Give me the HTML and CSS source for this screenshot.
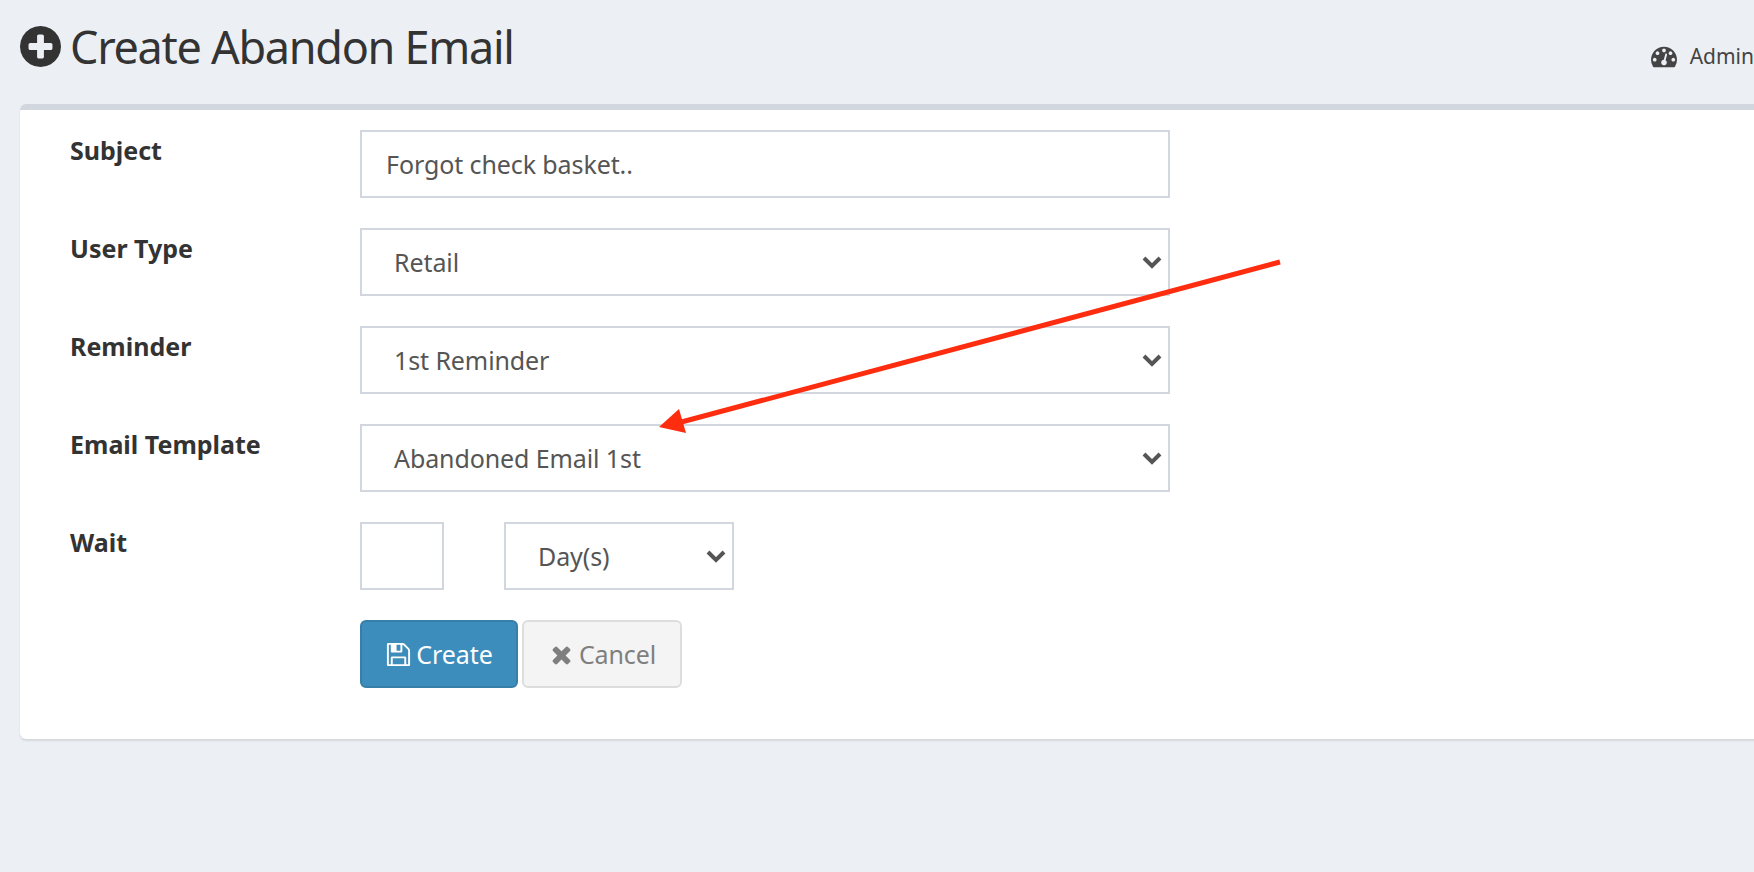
FILE: index.html
```html
<!DOCTYPE html>
<html>
<head>
    <title>Create Abandon Email</title>
    <link rel="stylesheet" href="styles.css">
</head>
<body>
<div class="wrapper">
    <div class="content-header">
        <h1>
            <svg class="title-icon" viewBox="0 0 1536 1536"><path d="M1216 832v-128q0-26-19-45t-45-19h-256v-256q0-26-19-45t-45-19h-128q-26 0-45 19t-19 45v256h-256q-26 0-45 19t-19 45v128q0 26 19 45t45 19h256v256q0 26 19 45t45 19h128q26 0 45-19t19-45v-256h256q26 0 45-19t19-45zm320-64q0 209-103 385.500t-279.500 279.500-385.500 103-385.500-103-279.500-279.500-103-385.500 103-385.500 279.500-279.500 385.500-103 385.500 103 279.500 279.500 103 385.500z"/></svg>
            Create Abandon Email
        </h1>
        <div class="crumb">
            <svg class="crumb-icon" viewBox="0 0 1792 1792"><path d="M384 1152q0-53-37.500-90.500t-90.500-37.500-90.500 37.500-37.500 90.500 37.500 90.500 90.500 37.500 90.500-37.500 37.500-90.500zm192-448q0-53-37.500-90.500t-90.500-37.500-90.500 37.500-37.500 90.500 37.500 90.500 90.500 37.500 90.500-37.500 37.500-90.500zm428 481l101-382q6-26-7.500-48.500t-38.500-29.500-48 6.500-30 39.500l-101 382q-60 5-107 43.500t-63 98.500q-20 77 20 146t117 89 146-20 89-117q16-60-6-117t-72-91zm660-33q0-53-37.500-90.500t-90.500-37.500-90.500 37.500-37.500 90.500 37.500 90.500 90.500 37.500 90.500-37.500 37.500-90.500zm-640-640q0-53-37.500-90.500t-90.500-37.500-90.500 37.500-37.500 90.500 37.500 90.500 90.500 37.500 90.500-37.500 37.500-90.500zm448 192q0-53-37.500-90.500t-90.500-37.500-90.500 37.500-37.500 90.500 37.500 90.500 90.500 37.500 90.500-37.500 37.500-90.500zm320 448q0 261-141 483-19 29-54 29h-1402q-35 0-54-29-141-221-141-483 0-182 71-348t191-286 286-191 348-71 348 71 286 191 191 286 71 348z"/></svg>
            <span>Admin</span>
        </div>
    </div>

    <div class="box">
        <form action="">
            <div class="form-row">
                <label>Subject</label>
                <input class="field wide text-field" type="text" value="Forgot check basket..">
            </div>
            <div class="form-row">
                <label>User Type</label>
                <select class="field wide"><option>Retail</option></select>
            </div>
            <div class="form-row">
                <label>Reminder</label>
                <select class="field wide"><option>1st Reminder</option></select>
            </div>
            <div class="form-row">
                <label>Email Template</label>
                <select class="field wide"><option>Abandoned Email 1st</option></select>
            </div>
            <div class="form-row">
                <label>Wait</label>
                <input class="field wait-num" type="text">
                <select class="field wait-unit"><option>Day(s)</option></select>
            </div>
            <div class="form-row buttons">
                <button class="btn btn-primary" type="button">
                    <svg class="btn-icon" viewBox="0 0 1792 1792"><path d="M512 1536h768v-384h-768v384zm896 0h128v-896q0-14-10-38.500t-20-34.500l-281-281q-10-10-34-20t-39-10v416q0 40-28 68t-68 28h-576q-40 0-68-28t-28-68v-416h-128v1280h128v-416q0-40 28-68t68-28h832q40 0 68 28t28 68v416zm-384-928v-320q0-13-9.500-22.500t-22.500-9.500h-192q-13 0-22.500 9.500t-9.500 22.500v320q0 13 9.500 22.500t22.500 9.500h192q13 0 22.500-9.500t9.500-22.500zm640 32v928q0 40-28 68t-68 28h-1344q-40 0-68-28t-28-68v-1344q0-40 28-68t68-28h928q40 0 88 20t76 48l280 280q28 28 48 76t20 88z"/></svg>
                    Create
                </button>
                <button class="btn btn-cancel" type="button">
                    <svg class="btn-icon" viewBox="0 0 1792 1792"><path d="M1490 1322q0 40-28 68l-136 136q-28 28-68 28t-68-28l-294-294-294 294q-28 28-68 28t-68-28l-136-136q-28-28-28-68t28-68l294-294-294-294q-28-28-28-68t28-68l136-136q28-28 68-28t68 28l294 294 294-294q28-28 68-28t68 28l136 136q28 28 28 68t-28 68l-294 294 294 294q28 28 28 68z"/></svg>
                    Cancel
                </button>
            </div>
        </form>
    </div>
</div>

<!-- red arrow drawn over the screenshot -->
<svg class="arrow" width="1754" height="872" viewBox="0 0 1754 872">
    <line x1="1280" y1="262" x2="674" y2="424" stroke="#ff2d10" stroke-width="5"/>
    <polygon points="659,427 679,409 686,433" fill="#ff2d10"/>
</svg>
</body>
</html>
```

FILE: styles.css
```css
html, body
{
    margin: 0;
    height: 100%;
    overflow: hidden;
}
body
{
    font-family: "Noto Sans", sans-serif;
    background-color: #ecf0f5;
    color: #333333;
}
.wrapper
{
    width: 1800px;
}
.content-header
{
    display: flex;
    justify-content: space-between;
    height: 104px;
    padding: 10px 46px 0 20px;
    box-sizing: border-box;
}
h1
{
    display: flex;
    align-items: center;
    gap: 9px;
    height: 72px;
    margin: 0;
    font-size: 45px;
    font-weight: 400;
    letter-spacing: -1.3px;
}
.title-icon
{
    width: 41px;
    height: 41px;
    fill: #333333;
}
.crumb
{
    display: flex;
    align-items: center;
    gap: 13px;
    height: 91px;
    margin-left: -1px;
    font-size: 21px;
    color: #444444;
}
.crumb-icon
{
    width: 26px;
    height: 26px;
    fill: #444444;
}
.box
{
    margin-left: 20px;
    height: 635px;
    box-sizing: border-box;
    background: #ffffff;
    border-top: 6px solid #d2d6de;
    border-radius: 6px;
    box-shadow: 0 2px 2px rgba(0, 0, 0, 0.1);
    padding: 20px 0 0 50px;
}
.form-row
{
    display: flex;
    height: 68px;
    margin-bottom: 30px;
}
label
{
    width: 290px;
    padding-top: 3px;
    font-size: 25px;
    font-weight: 700;
}
.field
{
    height: 68px;
    box-sizing: border-box;
    border: 2px solid #d2d6de;
    border-radius: 0;
    background-color: #ffffff;
    font-family: "Noto Sans", sans-serif;
    font-size: 25px;
    letter-spacing: -0.1px;
    color: #555555;
    outline: none;
}
select.field
{
    appearance: none;
    padding-left: 32px;
    background-image: url("data:image/svg+xml,%3Csvg xmlns='http://www.w3.org/2000/svg' width='20' height='14' viewBox='0 0 20 14'%3E%3Cpath d='M2 3l8 8 8-8' fill='none' stroke='%23555555' stroke-width='4'/%3E%3C/svg%3E");
    background-repeat: no-repeat;
    background-position: right 6px center;
}
.wide
{
    width: 810px;
}
.text-field
{
    padding-left: 24px;
}
.wait-num
{
    width: 84px;
    margin-right: 60px;
}
.wait-unit
{
    width: 230px;
}
.buttons
{
    gap: 4px;
    margin-left: 290px;
    margin-bottom: 0;
}
.btn
{
    display: flex;
    align-items: center;
    justify-content: center;
    gap: 4px;
    height: 68px;
    padding: 0;
    border-radius: 6px;
    font-family: "Noto Sans", sans-serif;
    font-size: 25px;
    letter-spacing: -0.1px;
}
.btn-icon
{
    width: 27px;
    height: 27px;
    fill: currentColor;
}
.btn-primary
{
    width: 158px;
    background: #3c8dbc;
    border: 2px solid #367fa9;
    color: #ffffff;
}
.btn-cancel
{
    width: 160px;
    background: #f4f4f4;
    border: 2px solid #dddddd;
    color: #7f7f7f;
}
.arrow
{
    position: absolute;
    left: 0;
    top: 0;
}
```
